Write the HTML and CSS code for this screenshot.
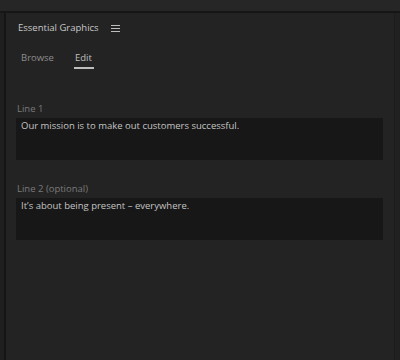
FILE: index.html
```html
<!DOCTYPE html>
<html lang="en">
  <head>
    <meta charset="UTF-8" />
    <title>Essential Graphics</title>
    <link rel="stylesheet" href="styles.css">
  </head>
  <body>
    <div class="top-strip"></div>
    <div class="frame">
      <div class="left-gutter"></div>
      <div class="panel">
        <div class="panel-header">
          <span class="panel-title">Essential Graphics</span>
          <span class="menu-icon">
            <svg width="9" height="7" viewBox="0 0 9 7">
              <rect x="0" y="0" width="9" height="1" fill="#bdbdbd" />
              <rect x="0" y="3" width="9" height="1" fill="#bdbdbd" />
              <rect x="0" y="6" width="9" height="1" fill="#bdbdbd" />
            </svg>
          </span>
        </div>
        <div class="tabs">
          <span class="tab">Browse</span>
          <span class="tab active">Edit</span>
        </div>
        <div class="fields">
          <div class="field">
            <label class="field-label">Line 1</label>
            <div class="field-box">Our mission is to make out customers successful.</div>
          </div>
          <div class="field">
            <label class="field-label">Line 2 (optional)</label>
            <div class="field-box">It’s about being present – everywhere.</div>
          </div>
        </div>
      </div>
      <div class="right-gutter"></div>
    </div>
  </body>
</html>
```

FILE: styles.css
```css
body {
  margin: 0;
  width: 400px;
  height: 360px;
  overflow: hidden;
  background: #232323;
  font-family: "Open Sans", sans-serif;
  display: flex;
  flex-direction: column;
}

.top-strip {
  height: 11px;
  background: #262626;
  border-bottom: 2px solid #161616;
}

.frame {
  flex: 1;
  display: flex;
}

.left-gutter {
  width: 4px;
  background: #1f1f1f;
  border-right: 2px solid #151515;
}

.right-gutter {
  width: 5px;
  background: #212121;
  border-left: 1px solid #1c1c1c;
}

.panel {
  flex: 1;
  background: #232323;
  padding: 0 11px 0 10px;
}

.panel-header {
  display: flex;
  align-items: center;
  height: 29px;
  padding: 0 0 0 2px;
}

.panel-title {
  font-size: 9.5px;
  color: #c8c8c8;
}

.menu-icon {
  display: flex;
  margin-left: 12px;
  margin-top: 1px;
}

.tabs {
  display: flex;
  gap: 20px;
  padding: 9px 0 0 5px;
  height: 24px;
}

.tab {
  font-size: 9.5px;
  color: #8c8c8c;
  height: 16px;
}

.tab.active {
  color: #c0c0c0;
  padding: 0 2px 0 1px;
  border-bottom: 2px solid #bdbdbd;
}

.fields {
  padding-top: 27px;
}

.field {
  margin-bottom: 22px;
}

.field-label {
  display: block;
  font-size: 9.5px;
  line-height: 13px;
  color: #7a7a7a;
  padding-left: 1px;
  margin-bottom: 3px;
}

.field-box {
  height: 42px;
  background: #171717;
  color: #c4c4c4;
  font-size: 9.5px;
  padding: 0 5px;
  line-height: 13px;
  padding-top: 1px;
  box-sizing: border-box;
}
```
